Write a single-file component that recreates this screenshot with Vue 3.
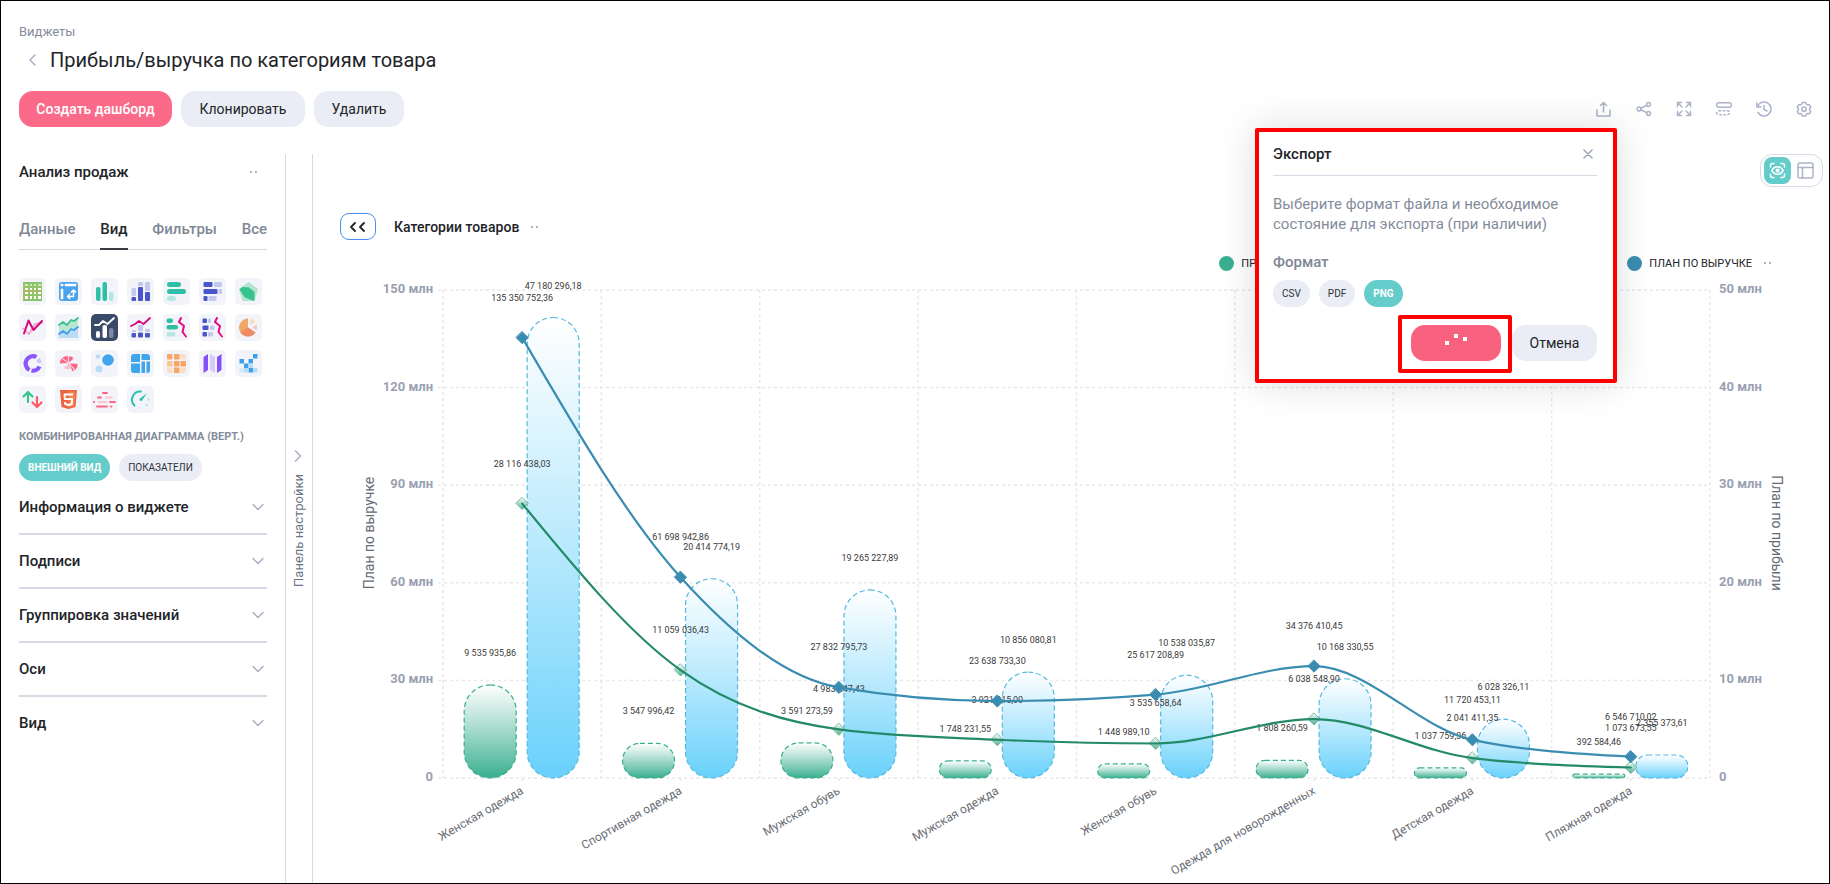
<script setup>
const tabs = ['Данные', 'Вид', 'Фильтры', 'Все']
const sections = ['Информация о виджете', 'Подписи', 'Группировка значений', 'Оси', 'Вид']

const widgetIcons = [
  { name: 'Таблица', art: '<rect x="4" y="4" width="19" height="19" rx="1" fill="#8fc468"/><path d="M4 5h19M4 22.5h19" stroke="#7cc576"/><path d="M6 10h3v2H6zM11 10h2v2h-2zM15 10h2v2h-2zM19 10h3v2h-3zM6 14h3v2H6zM11 14h2v2h-2zM15 14h2v2h-2zM19 14h3v2h-3zM6 18h3v3H6zM11 18h2v3h-2zM15 18h2v3h-2zM19 18h3v3h-3z" fill="#fff"/><path d="M6 6h3v2H6zM11 6h2v2h-2zM15 6h2v2h-2zM19 6h3v2h-3z" fill="#cfe9b8"/><path d="M5 4v19M4 13h19" stroke="#d0a75c" stroke-width=".8"/>' },
  { name: 'Сводная таблица', art: '<rect x="4" y="4" width="19" height="19" rx="3" fill="#4ba3ec"/><path d="M6 6h2v2H6zM10 6h11v2H10zM6 11h2v10H6z" fill="#fff" stroke="#fff" stroke-width=".6" stroke-linejoin="round"/><path d="M13 18.500h5.500v-6M15 16l-2.500 2.500 2.500 2.500M16 14.500l2.500-2.500 2.500 2.500" fill="none" stroke="#fff" stroke-width="1.600"/>' },
  { name: 'Столбцы', art: '<g fill="#2fbfa6"><rect x="5" y="9" width="4.500" height="14" rx="2"/><rect x="11.500" y="4" width="4.500" height="19" rx="2"/></g><rect x="18" y="14" width="4.500" height="9" rx="2" fill="#b4e5e0"/>' },
  { name: 'Столбцы с накоплением', art: '<g fill="#c4c8ee"><rect x="4.500" y="10" width="4.500" height="8" rx="1"/><rect x="11" y="4" width="5" height="4" rx="1"/><rect x="18" y="4" width="5" height="9" rx="1"/></g><g fill="#4a55cb"><rect x="4.500" y="19" width="4.500" height="4" rx="1"/><rect x="11" y="9" width="5" height="14" rx="1"/><rect x="18" y="14" width="5" height="9" rx="1"/></g>' },
  { name: 'Строки', art: '<g fill="#2fbfa6"><rect x="4" y="4" width="14" height="5" rx="2.500"/><rect x="4" y="11" width="19" height="5" rx="2.500"/></g><rect x="4" y="18" width="9" height="5" rx="2.500" fill="#b4e5e0"/>' },
  { name: 'Строки с накоплением', art: '<g fill="#4a55cb"><rect x="4.500" y="4" width="9" height="5" rx="1"/><rect x="4.500" y="11" width="14" height="5" rx="1"/><rect x="4.500" y="18" width="4" height="5" rx="1"/></g><g fill="#c4c8ee"><rect x="15" y="4" width="8" height="5" rx="1"/><rect x="19.500" y="11" width="3.500" height="5" rx="1"/><rect x="9.500" y="18" width="8" height="5" rx="1"/></g>' },
  { name: 'Радар', art: '<path d="M13.500 4l9.500 7-3.500 12h-12L4 11z" fill="#b2e4d1"/><path d="M5 11.500l2-2 7 .5 5 4v8.500l-9-3.500z" fill="#37c48c" stroke="#37c48c" stroke-linejoin="round"/>' },
  { name: 'Линии', art: '<path d="M4 14.500l6 5.500 6-10 7-1" fill="none" stroke="#f4a8d5" stroke-width="2" stroke-linejoin="round" stroke-linecap="round"/><path d="M5 19.500L9.500 6.500l5 9.500 8.500-9" fill="none" stroke="#d4087f" stroke-width="2" stroke-linejoin="round" stroke-linecap="round"/>' },
  { name: 'Области', art: '<path d="M4 11l4-3 4 3 4-6 3 2 4-3v20H4z" fill="#b8e8d4"/><path d="M4 20l4-3 4 3 4-6 3 2 4-3v11H4z" fill="#bbdcf5"/><path d="M4 11l4-3 4 3 4-5 3 1 4-3" fill="none" stroke="#37c48c" stroke-width="1.800" stroke-linejoin="round" stroke-linecap="round"/><path d="M4 20l4-3 4 3 4-5 3 1 4-3" fill="none" stroke="#409fe8" stroke-width="1.800" stroke-linejoin="round" stroke-linecap="round"/>' },
  { name: 'Комбинированная диаграмма (верт.)', active: true, art: '<path d="M4 11l4 0 4-4 4.500 3L23 4" fill="none" stroke="#fff" stroke-width="1.800" stroke-linejoin="round" stroke-linecap="round"/><rect x="5" y="17" width="4" height="7" rx="1.800" fill="#fff"/><rect x="11.500" y="11" width="4.500" height="13" rx="1.800" fill="#fff"/><rect x="18" y="14" width="4.500" height="10" rx="1.800" fill="#7c8aa1"/>' },
  { name: 'Комбинированная с накоплением', art: '<path d="M4 12l4-2 4-3 4.500 3L23 4" fill="none" stroke="#d4087f" stroke-width="1.800" stroke-linejoin="round" stroke-linecap="round"/><g fill="#c4c8ee"><rect x="4.500" y="16" width="4.500" height="2" rx="1"/><rect x="11" y="11" width="5" height="6" rx="1"/><rect x="18" y="15" width="5" height="3" rx="1"/></g><g fill="#4a55cb"><rect x="4.500" y="19" width="4.500" height="4.500" rx="1"/><rect x="11" y="18.500" width="5" height="5" rx="1"/><rect x="18" y="19" width="5" height="4.500" rx="1"/></g>' },
  { name: 'Комбинированная диаграмма (гориз.)', art: '<g fill="#2fbfa6"><rect x="3.500" y="4.500" width="6.500" height="4.500" rx="2"/><rect x="3.500" y="11" width="11.500" height="4.500" rx="2"/></g><rect x="3.500" y="18" width="9" height="4.500" rx="2" fill="#b4e5e0"/><path d="M18 4l-2 4 5 4-1.500 6 3.500 4.500" fill="none" stroke="#e20a86" stroke-width="2" stroke-linejoin="round" stroke-linecap="round"/>' },
  { name: 'Комбинированная (гориз.) с накоплением', art: '<g fill="#4a55cb"><rect x="3.500" y="4.500" width="4.500" height="4.500" rx="1"/><rect x="3.500" y="11.500" width="6" height="4.500" rx="1"/><rect x="3.500" y="18" width="4.500" height="4.500" rx="1"/></g><g fill="#c4c8ee"><rect x="9" y="4.500" width="3" height="4.500" rx="1"/><rect x="11" y="11.500" width="4.500" height="4.500" rx="1"/><rect x="9" y="18" width="5" height="4.500" rx="1"/></g><path d="M18 4l-2 4 5 4-1.500 6 3.500 4.500" fill="none" stroke="#e20a86" stroke-width="2" stroke-linejoin="round" stroke-linecap="round"/>' },
  { name: 'Круговая', art: '<path d="M13 4.500v9l7.500 5A9 9 0 1 1 13 4.500z" fill="#f0a868"/><path d="M13 13.500l7.500 5a9 9 0 0 1-15 0z" fill="#ec7d63" opacity=".7"/><path d="M15 4.500a8 8 0 0 1 5.500 4L15 11z" fill="#f7dcc0"/><path d="M21.500 10.500a9 9 0 0 1 0 6L17 13z" fill="#f9c6c4"/>' },
  { name: 'Кольцо', art: '<g fill="none" stroke-width="4.200"><path d="M10.500 20A7 7 0 0 1 17.500 7" stroke="#8b57fb"/><path d="M12.500 20.500a7 7 0 0 0 8-4" stroke="#8b57fb"/><path d="M19 9a7 7 0 0 1 1.500 4" stroke="#d5c4fc"/></g>' },
  { name: 'Роза', art: '<g fill="#fd6585" stroke="#f3f4f9" stroke-width=".7"><path d="M14 13L4.500 14a9 9 0 0 1 2-6z"/><path d="M14 13L6.500 8a9 8 0 0 1 6.500-2.500z"/><path d="M14 13l-1-6.500 4-.5a6 6 0 0 1 1.500 3z"/><path d="M14 13l9 .5a9 9 0 0 1-2.500 7z"/><path d="M14 13l6 7.500-3 1z"/></g><path d="M14 13l-5 5a7 7 0 0 0 7 .5z" fill="#ffc0cd"/>' },
  { name: 'Пузырьки', art: '<circle cx="17" cy="10" r="5.800" fill="#42a5ee"/><circle cx="7" cy="6.500" r="2.300" fill="#badcf6"/><circle cx="8" cy="19" r="3.500" fill="#badcf6"/>' },
  { name: 'Дерево', art: '<path d="M7 4h6v8H4V7a3 3 0 0 1 3-3zM14.500 4H20a3 3 0 0 1 3 3v3h-8.500zM4 13.500h9V23H7a3 3 0 0 1-3-3zM14.500 11.500H18V23h-3.500zM19.500 11.500H23V20a3 3 0 0 1-3 3h-.5z" fill="#3fa6ec"/>' },
  { name: 'Тепловая карта', art: '<g fill="#f8a665"><rect x="4" y="4" width="5.500" height="5.500" rx="1"/><rect x="11" y="4" width="5.500" height="5.500"/><rect x="4" y="11" width="5.500" height="5.500" fill="#f9c78f"/><rect x="11" y="11" width="5.500" height="5.500"/><rect x="17.500" y="11" width="5.500" height="5.500"/><rect x="11" y="17.500" width="5.500" height="5.500"/></g><path d="M17.500 4H21a2 2 0 0 1 2 2v3.500h-5.500zM4 17.500h5.500V23H6a2 2 0 0 1-2-2zM17.500 17.500H23V21a2 2 0 0 1-2 2h-3.500z" fill="#fbdcc4"/>' },
  { name: 'Карта', art: '<path d="M4.500 7l4.500-3v16l-4.500 3zM18 7l4.500-3v16L18 23z" fill="#8650f8"/><path d="M11 4l5 3v16l-5-3z" fill="#d8cafd"/>' },
  { name: 'Матрица', art: '<g fill="#3f9fe9"><rect x="18" y="4" width="4.500" height="4.500"/><rect x="4.500" y="9" width="4.500" height="4.500"/><rect x="9" y="13.500" width="4.500" height="4.500"/><rect x="13.500" y="9" width="4.500" height="4.500"/><rect x="13.500" y="18" width="4.500" height="4.500"/></g><g fill="#b9dbf6"><rect x="13.500" y="13.500" width="4.500" height="4.500"/><rect x="9" y="18" width="4.500" height="4.500"/><rect x="18" y="18" width="4.500" height="4.500"/><rect x="4.500" y="18" width="4.500" height="4.500" opacity=".5"/></g>' },
  { name: 'Показатель', art: '<g fill="none" stroke-width="2.200" stroke-linecap="round" stroke-linejoin="round"><path d="M9 16V6.500M4.500 10.500L9 6l4.500 4.500" stroke="#35c48b"/><path d="M18 11v9.500M13.500 16.500L18 21l4.500-4.500" stroke="#fb5a68"/></g>' },
  { name: 'HTML', art: '<path d="M5 4h17l-1.500 17-7 2-7-2z" fill="#ea6640"/><path d="M13.500 5.500h7L19 20l-5.500 1.500z" fill="#f58250"/><path d="M18 8.500H9.500l.3 4.500h7.400l-.4 5-3.300 1-3.300-1-.2-2" fill="none" stroke="#fff" stroke-width="1.900"/>' },
  { name: 'Диаграмма Ганта', art: '<g stroke-width="2" stroke-linecap="round"><path d="M12 7h4M7 11.500h3M19 16h5M6 20.500h10M20 20.500h.5M3 16h.2" stroke="#fd6585"/><path d="M15 11.500h6M8 16h7" stroke="#fdc3ce"/></g>' },
  { name: 'Спидометр', art: '<path d="M7.500 19.500A8.200 8.200 0 0 1 14 5.500" fill="none" stroke="#2cbfae" stroke-width="2" stroke-linecap="round"/><path d="M20 7l-5 7.500a1.500 1.500 0 0 1-2.500-1.500z" fill="#2cbfae"/><circle cx="21.500" cy="13.500" r="1.200" fill="#b4e5e0"/><circle cx="19.500" cy="19" r="1.200" fill="#b4e5e0"/>' }
]

const tools = [
  { name: 'Экспорт', art: '<path d="M1 9v6h13V9" /><path d="M7.500 11V1.500M4.400 4.500l3.100-3 3.100 3"/>' },
  { name: 'Поделиться', art: '<circle cx="3" cy="8" r="1.900"/><circle cx="12.500" cy="3.500" r="1.900"/><circle cx="12.500" cy="12.500" r="1.900"/><path d="M4.800 7.200l5.900-2.800M4.800 8.800l5.900 2.800"/>' },
  { name: 'На весь экран', art: '<path d="M1.500 5.500v-4h4M1.500 1.500l4.500 4.500M10.500 1.500h4v4M14.500 1.500L10 6M1.500 10.500v4h4M1.500 14.500L6 10M14.500 10.500v4h-4M14.500 14.500L10 10"/>' },
  { name: 'Строки', art: '<rect x="0.700" y="1.700" width="14.600" height="4.600" rx="2"/><rect x="0.700" y="9.700" width="13" height="4" rx="2" stroke-dasharray="2.600 1.500" stroke-linecap="butt"/>' },
  { name: 'История', art: '<path d="M1.300 6A7 7 0 1 1 2 11.500M.8 2v4h4M8 4.500v4l3 1.500"/>' },
  { name: 'Настройки', art: '<path d="M6.300 1.500h3.400l.6 1.700 1.200.7 1.800-.3 1.500 2.600-1.200 1.400v1.200l1.200 1.400-1.500 2.600-1.800-.3-1.200.7-.6 1.700H6.300l-.6-1.700-1.200-.7-1.800.3-1.500-2.600 1.200-1.400V7.600L1.200 6.200l1.500-2.600 1.800.3 1.200-.7z"/><circle cx="8" cy="8.200" r="2.200"/>' }
]

const formats = ['CSV', 'PDF', 'PNG']

const rows = [
  { name: 'Женская одежда', profit: [9.535936, '9 535 935,86'], revenue: [47.180296, '47 180 296,18'], planRevenue: [135.350752, '135 350 752,36'], planProfit: [28.116438, '28 116 438,03'] },
  { name: 'Спортивная одежда', profit: [3.547996, '3 547 996,42'], revenue: [20.414774, '20 414 774,19'], planRevenue: [61.698943, '61 698 942,86'], planProfit: [11.059036, '11 059 036,43'] },
  { name: 'Мужская обувь', profit: [3.591274, '3 591 273,59'], revenue: [19.265228, '19 265 227,89'], planRevenue: [27.832796, '27 832 795,73'], planProfit: [4.983247, '4 983 247,43'] },
  { name: 'Мужская одежда', profit: [1.748232, '1 748 231,55'], revenue: [10.856081, '10 856 080,81'], planRevenue: [23.638733, '23 638 733,30'], planProfit: [3.921215, '3 921 215,00'] },
  { name: 'Женская обувь', profit: [1.448989, '1 448 989,10'], revenue: [10.538036, '10 538 035,87'], planRevenue: [25.617209, '25 617 208,89'], planProfit: [3.535659, '3 535 658,64'] },
  { name: 'Одежда для новорожденных', profit: [1.808261, '1 808 260,59'], revenue: [10.168331, '10 168 330,55'], planRevenue: [34.37641, '34 376 410,45'], planProfit: [6.038549, '6 038 548,90'] },
  { name: 'Детская одежда', profit: [1.037759, '1 037 759,36'], revenue: [6.028326, '6 028 326,11'], planRevenue: [11.720453, '11 720 453,11'], planProfit: [2.041411, '2 041 411,35'] },
  { name: 'Пляжная одежда', profit: [0.392584, '392 584,46'], revenue: [2.355374, '2 355 373,61'], planRevenue: [6.54671, '6 546 710,02'], planProfit: [1.073674, '1 073 673,55'] }
]

// Plot box inside the 1516 x 608 chart canvas
const left = 130
const right = 1397
const top = 17
const base = 505
const step = (right - left) / rows.length
const barWidth = 52

const yOf = (value, max) => base - (value / max) * (base - top)

const ticks = [0, 1, 2, 3, 4, 5].map((n) => ({
  y: base - (n * (base - top)) / 5,
  leftText: n ? `${n * 30} млн` : '0',
  rightText: n ? `${n * 10} млн` : '0'
}))
const verticals = Array.from({ length: rows.length + 1 }, (_, i) => left + i * step)

function bar(x, value, kind) {
  const y = yOf(value[0], 50)
  const height = base - y
  return { x, y, height, radius: Math.min(barWidth / 2, height / 2), kind, text: value[1] }
}

const groups = rows.map((row, i) => {
  const cx = left + (i + 0.5) * step
  return {
    name: row.name,
    cx,
    bars: [bar(cx - 58, row.profit, 'profit'), bar(cx + 5, row.revenue, 'revenue')],
    blue: { y: yOf(row.planRevenue[0], 150), text: row.planRevenue[1] },
    green: { y: yOf(row.planProfit[0], 50), text: row.planProfit[1] }
  }
})

// Monotone cubic curve through equally spaced points
function curve(ys) {
  const slopes = ys.slice(1).map((y, i) => (y - ys[i]) / step)
  const tangents = ys.map((_, i) => {
    if (i === 0 || i === ys.length - 1) return null
    const a = slopes[i - 1]
    const b = slopes[i]
    if (a * b <= 0) return 0
    return Math.sign(a) * Math.min(Math.abs(a), Math.abs(b), Math.abs(a + b) / 4) * 2
  })
  tangents[0] = (3 * slopes[0] - tangents[1]) / 2
  const last = ys.length - 1
  tangents[last] = (3 * slopes[last - 1] - tangents[last - 1]) / 2
  let d = `M${groups[0].cx} ${ys[0]}`
  for (let i = 1; i < ys.length; i++) {
    const x0 = groups[i - 1].cx
    const x1 = groups[i].cx
    const t = step / 3
    d += `C${x0 + t} ${ys[i - 1] + tangents[i - 1] * t} ${x1 - t} ${ys[i] - tangents[i] * t} ${x1} ${ys[i]}`
  }
  return d
}
const bluePath = curve(groups.map((g) => g.blue.y))
const greenPath = curve(groups.map((g) => g.green.y))
const diamond = (x, y) => `M${x} ${y - 6}l6 6-6 6-6-6z`
</script>

<template>
  <div class="page">
    <header class="head">
      <a class="crumb" href="#">Виджеты</a>
      <div class="title-row">
        <button class="back" aria-label="Назад">
          <svg width="8" height="12" viewBox="0 0 8 12"><path d="M7 1L2 6l5 5" /></svg>
        </button>
        <h1>Прибыль/выручка по категориям товара</h1>
      </div>
      <div class="action-row">
        <button class="btn primary create">Создать дашборд</button>
        <button class="btn clone">Клонировать</button>
        <button class="btn remove">Удалить</button>
        <div class="tools">
          <button v-for="tool in tools" :key="tool.name" :aria-label="tool.name">
            <svg width="16" height="16" viewBox="0 0 16 16" v-html="tool.art"></svg>
          </button>
        </div>
      </div>
    </header>

    <div class="body">
      <aside class="side">
        <div class="side-head">
          <h2>Анализ продаж</h2>
          <button class="dots" aria-label="Меню"><i></i><i></i></button>
        </div>
        <nav class="tabs">
          <button v-for="tab in tabs" :key="tab" :class="{ on: tab === 'Вид' }">{{ tab }}</button>
        </nav>
        <div class="icons">
          <button v-for="icon in widgetIcons" :key="icon.name" :class="{ on: icon.active }" :aria-label="icon.name">
            <svg width="27" height="27" viewBox="0 0 27 27" v-html="icon.art"></svg>
          </button>
        </div>
        <p class="kind">КОМБИНИРОВАННАЯ ДИАГРАММА (ВЕРТ.)</p>
        <div class="chips modes">
          <button class="chip on">ВНЕШНИЙ ВИД</button>
          <button class="chip">ПОКАЗАТЕЛИ</button>
        </div>
        <button v-for="section in sections" :key="section" class="section">
          <span>{{ section }}</span>
          <svg width="12" height="8" viewBox="0 0 12 8"><path d="M1 1.500l5 5 5-5" /></svg>
        </button>
      </aside>

      <button class="strip">
        <svg width="8" height="12" viewBox="0 0 8 12"><path d="M1.500 1l5 5-5 5" /></svg>
        <span>Панель настройки</span>
      </button>

      <main class="main">
        <div class="view-row">
          <div class="switch">
            <button class="on" aria-label="Просмотр">
              <svg width="17" height="17" viewBox="0 0 17 17">
                <path d="M1.500 5V3.500a2 2 0 0 1 2-2H5M12 1.500h1.500a2 2 0 0 1 2 2V5M15.500 12v1.500a2 2 0 0 1-2 2H12M5 15.500H3.500a2 2 0 0 1-2-2V12M2.800 8.500Q5 4.800 8.500 4.800t5.700 3.700Q12 12.200 8.500 12.200T2.800 8.500z" />
                <circle cx="8.500" cy="8.500" r="1.200" />
              </svg>
            </button>
            <button aria-label="Макет">
              <svg width="17" height="17" viewBox="0 0 17 17"><rect x="1" y="1" width="15" height="15" rx="2" /><path d="M1 5.500h15M5.500 5.500V16" /></svg>
            </button>
          </div>
        </div>
        <div class="level-row">
          <button class="up" aria-label="Назад по уровням">
            <svg width="16" height="10" viewBox="0 0 16 10"><path d="M5 1L1 5l4 4M14 1l-4 4 4 4" /></svg>
          </button>
          <h3>Категории товаров</h3>
          <button class="dots" aria-label="Меню уровня"><i></i><i></i></button>
        </div>
        <div class="legend">
          <span class="entry first"><i class="green"></i>ПРИБЫЛЬ</span>
          <span class="entry"><i class="blue"></i>ПЛАН ПО ВЫРУЧКЕ</span>
          <button class="dots" aria-label="Меню показателя"><i></i><i></i></button>
        </div>

        <svg class="chart" viewBox="0 0 1516 608">
          <defs>
            <linearGradient id="profit" x1="0" y1="0" x2="0" y2="1">
              <stop offset="0" stop-color="#fff" stop-opacity=".9" /><stop offset="1" stop-color="#3aaf8f" />
            </linearGradient>
            <linearGradient id="revenue" x1="0" y1="0" x2="0" y2="1">
              <stop offset="0" stop-color="#fff" stop-opacity=".9" /><stop offset="1" stop-color="#69d1fb" />
            </linearGradient>
            <linearGradient id="mark" x1="0" y1="0" x2="0" y2="1">
              <stop offset="0" stop-color="#fff" /><stop offset="1" stop-color="#4fae92" />
            </linearGradient>
          </defs>
          <g class="grid">
            <path v-for="t in ticks" :key="t.y" :d="`M${left - 5} ${t.y}H${right}`" />
            <path v-for="x in verticals" :key="x" :d="`M${x} ${top}V${base}`" />
            <path v-for="g in groups" :key="g.cx" :d="`M${g.cx} ${base}v4`" />
          </g>
          <g class="tick">
            <text v-for="t in ticks" :key="t.y" x="120" :y="t.y + 3" text-anchor="end">{{ t.leftText }}</text>
            <text v-for="t in ticks" :key="-t.y" x="1406" :y="t.y + 3">{{ t.rightText }}</text>
          </g>
          <text class="axis" transform="translate(61 260) rotate(-90)" text-anchor="middle">План по выручке</text>
          <text class="axis" transform="translate(1459 260) rotate(90)" text-anchor="middle">План по прибыли</text>
          <g v-for="g in groups" :key="g.name">
            <rect v-for="b in g.bars" :key="b.kind" :class="b.kind" :x="b.x" :y="b.y" :width="barWidth" :height="b.height" :rx="b.radius" />
          </g>
          <g class="value">
            <template v-for="g in groups" :key="g.name">
              <text v-for="b in g.bars" :key="b.kind" :x="b.x + barWidth / 2" :y="b.y - 29">{{ b.text }}</text>
              <text :x="g.cx" :y="g.blue.y - 37">{{ g.blue.text }}</text>
              <text :x="g.cx" :y="g.green.y - 37">{{ g.green.text }}</text>
            </template>
          </g>
          <path v-for="g in groups" :key="g.cx" class="green-mark" :d="diamond(g.cx, g.green.y)" />
          <path class="line green-line" :d="greenPath" />
          <path class="line blue-line" :d="bluePath" />
          <path v-for="g in groups" :key="-g.cx" class="blue-mark" :d="diamond(g.cx, g.blue.y)" />
          <text v-for="g in groups" :key="g.name" class="cat" :transform="`translate(${g.cx + 2} 520) rotate(-30)`">{{ g.name }}</text>
        </svg>
      </main>
    </div>

    <section class="modal" role="dialog" aria-labelledby="export-title">
      <div class="modal-head">
        <h2 id="export-title">Экспорт</h2>
        <button aria-label="Закрыть"><svg width="10" height="10" viewBox="0 0 10 10"><path d="M1 1l8 8M9 1L1 9" /></svg></button>
      </div>
      <p class="hint">Выберите формат файла и необходимое состояние для экспорта (при наличии)</p>
      <p class="format">Формат</p>
      <div class="chips">
        <button v-for="format in formats" :key="format" class="chip" :class="{ on: format === 'PNG' }">{{ format }}</button>
      </div>
      <div class="modal-actions">
        <button class="btn primary busy" aria-label="Экспорт">
          <svg width="22" height="11" viewBox="0 0 22 11"><path d="M0 7h4v4H0zM9 0h4v4H9zM18 3h4v4h-4z" /></svg>
        </button>
        <button class="btn cancel">Отмена</button>
      </div>
    </section>
  </div>
</template>

<style>
body {
  margin: 0;
  background: #fff;
}
</style>

<style scoped>
* {
  box-sizing: border-box;
}
.page {
  position: relative;
  display: flex;
  flex-direction: column;
  min-height: 100vh;
  border: 1px solid #000;
  color: #222428;
  font-family: Roboto, "Liberation Sans", sans-serif;
  font-size: 14px;
}
button {
  margin: 0;
  padding: 0;
  border: 0;
  background: none;
  color: inherit;
  font: inherit;
  cursor: pointer;
}
h1,
h2,
h3,
p {
  margin: 0;
  font-weight: 500;
}
svg {
  display: block;
  fill: none;
  stroke-linecap: round;
  stroke-linejoin: round;
}
.head {
  padding: 20px 17px 0 18px;
}
.crumb {
  display: block;
  color: #848c9b;
  font-size: 13px;
  line-height: 22px;
  text-decoration: none;
}
.title-row {
  display: flex;
  align-items: center;
  gap: 14px;
  height: 34px;
  padding-left: 9px;
}
.back svg,
.strip svg,
.section svg {
  stroke: #a9b0c6;
  stroke-width: 1.5;
}
h1 {
  font-size: 20px;
  font-weight: 400;
}
.action-row {
  display: flex;
  gap: 9px;
  margin-top: 14px;
}
.btn {
  height: 36px;
  padding: 0;
  border-radius: 14px;
  background: #eaedf5;
  font-size: 14px;
}
.primary {
  background: #fb6b89;
  color: #fff;
}
.create {
  width: 153px;
  font-weight: 500;
}
.clone {
  width: 124px;
}
.remove {
  width: 90px;
}
.tools {
  display: flex;
  align-items: center;
  gap: 24px;
  margin-left: auto;
}
.tools svg {
  stroke: #adb3c9;
  stroke-width: 1.5;
}
.body {
  display: flex;
  flex: 1;
  margin-top: 27px;
}
.side {
  flex: none;
  width: 285px;
  padding: 0 18px;
  border-right: 1px solid #d5dae5;
}
.side-head {
  display: flex;
  align-items: center;
  justify-content: space-between;
  height: 36px;
  padding-right: 10px;
}
.side-head h2 {
  font-size: 15px;
}
.dots {
  display: flex;
  gap: 3px;
}
.dots i {
  width: 2px;
  height: 2px;
  background: #adb3c6;
}
.tabs {
  display: flex;
  justify-content: space-between;
  margin-top: 20px;
  border-bottom: 1px solid #d5dae5;
}
.tabs button {
  height: 40px;
  margin-bottom: -1px;
  border-bottom: 2px solid transparent;
  color: #7e8796;
  font-size: 15px;
  font-weight: 500;
}
.tabs .on {
  border-color: #3b3d42;
  color: #26282c;
}
.icons {
  display: grid;
  grid-template-columns: repeat(7, 27px);
  gap: 9px;
  margin-top: 28px;
}
.icons button {
  height: 27px;
  border-radius: 5px;
  background: #f3f4f9;
}
.icons .on {
  background: #384a68;
}
.icons svg {
  stroke-linecap: butt;
}
.kind {
  margin-top: 15px;
  color: #848c9b;
  font-size: 11px;
  font-weight: 700;
  line-height: 18px;
}
.chips {
  display: flex;
  gap: 9px;
}
.chip {
  height: 27px;
  padding: 0 9px;
  border-radius: 14px;
  background: #eaedf5;
  color: #2e3138;
  font-size: 10px;
}
.chip.on {
  background: #64cccb;
  color: #fff;
  font-weight: 700;
}
.modes {
  margin-top: 8px;
}
.section {
  display: flex;
  align-items: center;
  justify-content: space-between;
  width: 100%;
  height: 54px;
  padding-right: 3px;
  border-bottom: 2px solid #d5dae5;
  font-size: 15px;
  font-weight: 500;
}
.section:last-child {
  border-color: transparent;
}
.strip {
  display: flex;
  flex: none;
  flex-direction: column;
  align-items: center;
  justify-content: center;
  gap: 12px;
  width: 27px;
  padding-right: 2px;
  border-right: 1px solid #d5dae5;
  color: #6c7484;
  font-size: 13px;
}
.strip span {
  writing-mode: vertical-rl;
  transform: rotate(180deg);
}
.main {
  flex: 1;
  min-width: 0;
}
.view-row {
  display: flex;
  justify-content: flex-end;
  padding-right: 6px;
}
.switch {
  display: flex;
  gap: 1px;
  padding: 2px 3px;
  border: 1px solid #d5dbe8;
  border-radius: 12px;
}
.switch button {
  display: grid;
  place-items: center;
  width: 27px;
  height: 27px;
  border-radius: 8px;
}
.switch svg {
  stroke: #adb3c9;
  stroke-width: 1.5;
}
.switch .on {
  background: #64cccb;
}
.switch .on svg {
  stroke: #fff;
}
.level-row {
  display: flex;
  align-items: center;
  margin-top: 26px;
  padding-left: 27px;
}
.up {
  display: grid;
  place-items: center;
  width: 36px;
  height: 27px;
  border: 1px solid #4a8df0;
  border-radius: 9px;
}
.up svg {
  stroke: #222428;
  stroke-width: 1.8;
}
.level-row h3 {
  margin: 0 12px 0 18px;
  font-size: 14px;
}
.legend {
  display: flex;
  align-items: center;
  justify-content: flex-end;
  height: 20px;
  margin-top: 13px;
  padding-right: 58px;
  font-size: 11px;
}
.entry {
  display: flex;
  align-items: center;
  gap: 7px;
}
.entry.first {
  width: 408px;
}
.entry i {
  width: 15px;
  height: 15px;
  border-radius: 50%;
}
.legend .dots {
  margin-left: 12px;
}
.green {
  background: #3aaf8f;
}
.blue {
  background: #3a8db0;
}
.chart {
  width: 100%;
  overflow: hidden;
}
.chart text {
  stroke: none;
}
.grid path {
  stroke: #e7e8ec;
  stroke-width: 1.5;
  stroke-dasharray: 3 3;
  stroke-linecap: butt;
}
.tick text {
  fill: #98a0b2;
  font-size: 13px;
  font-weight: 700;
}
.axis {
  fill: #666a73;
  font-size: 14px;
}
.profit,
.revenue {
  stroke-width: 1.2;
  stroke-dasharray: 5 3;
  stroke-linecap: butt;
}
.profit {
  fill: url(#profit);
  stroke: #3aaf8f;
}
.revenue {
  fill: url(#revenue);
  stroke: #55b8de;
}
.value text {
  fill: #3a3a3a;
  font-size: 9px;
  text-anchor: middle;
}
.line {
  stroke-width: 2.2;
}
.green-line {
  stroke: #238a68;
}
.blue-line {
  stroke: #3a8db0;
}
.green-mark {
  fill: url(#mark);
  stroke: #6dbb9f;
}
.blue-mark {
  fill: #3a8db0;
  stroke: #3a8db0;
}
.cat {
  fill: #6a6d75;
  font-size: 12px;
  text-anchor: end;
}
.modal {
  position: absolute;
  top: 127px;
  right: 212px;
  width: 362px;
  height: 255px;
  padding: 0 16px 0 14px;
  border: 4px solid #f00;
  border-radius: 2px;
  background: #fff;
  box-shadow: 0 0 36px rgba(30, 35, 50, 0.16);
}
.modal-head {
  display: flex;
  align-items: center;
  justify-content: space-between;
  height: 44px;
  padding-right: 4px;
  border-bottom: 1px solid #d5dae5;
}
.modal-head h2 {
  font-size: 15px;
}
.modal-head svg {
  stroke: #9fa6ba;
  stroke-width: 1.5;
}
.hint {
  margin-top: 18px;
  color: #848c9b;
  font-size: 15px;
  font-weight: 400;
  line-height: 20px;
}
.format {
  margin-top: 18px;
  color: #7e8796;
  font-size: 15px;
  line-height: 20px;
}
.modal .chips {
  margin-top: 8px;
}
.modal-actions {
  display: flex;
  justify-content: flex-end;
  gap: 11px;
  margin-top: 18px;
}
.busy {
  position: relative;
  display: grid;
  place-items: center;
  width: 90px;
  padding: 0 0 8px;
  background: #f9627f;
}
.busy svg {
  fill: #fff;
}
.busy::after {
  position: absolute;
  inset: -10px -11px -12px -13px;
  border: 4px solid #f00;
  border-radius: 2px;
  content: "";
}
.cancel {
  width: 85px;
}
</style>
